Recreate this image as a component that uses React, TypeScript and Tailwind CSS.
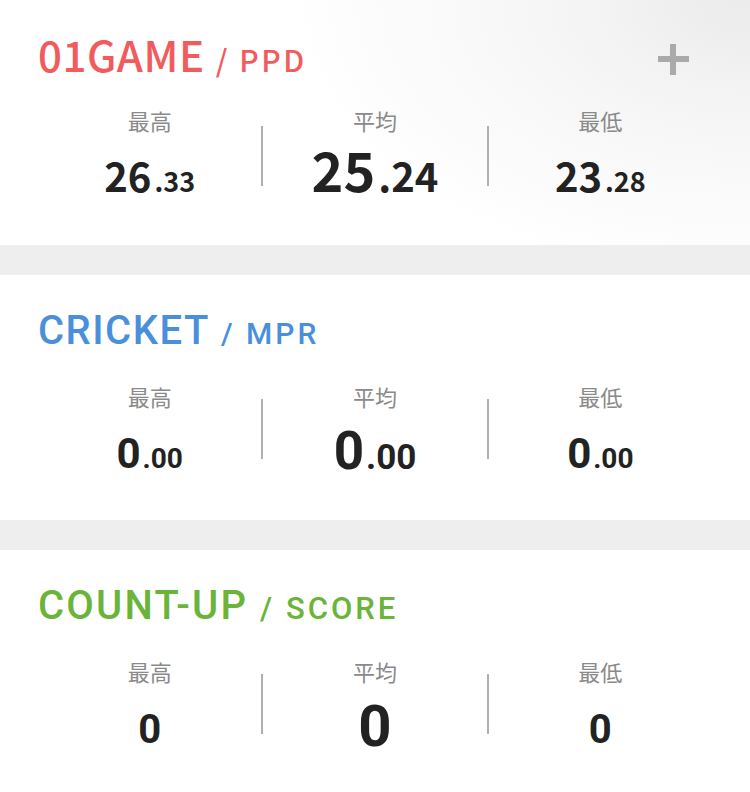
import React from "react";

type Num = { int: string; dec?: string };
type StatDef = { value: Num; intCls: string; decCls: string; mt: string };

const cjk = "font-['Noto_Sans_CJK_JP',sans-serif]";
const roboto = "font-['Roboto','Noto_Sans_CJK_JP',sans-serif]";

function Stat({ label, value, intCls, decCls, mt, font }: StatDef & { label: string; font: string }) {
  return (
    <div className="flex-1 flex flex-col items-center">
      <div className={`${cjk} text-[22px] leading-none text-[#8a8a8a] h-[26px]`}>{label}</div>
      <div className={`${font} font-bold text-[#222] flex items-baseline leading-none ${mt}`}>
        <span className={intCls}>{value.int}</span>
        {value.dec !== undefined && <span className={decCls}>{value.dec}</span>}
      </div>
    </div>
  );
}

function Divider({ mt }: { mt: string }) {
  return <div className={`w-[2px] h-[60px] bg-[#b0b0b0] ${mt}`} />;
}

function Section({
  title,
  unit,
  color,
  font,
  titleCls,
  unitCls,
  stats,
  plus,
  gradient,
  height,
  pt,
  rowMt,
  divMt,
}: {
  title: string;
  unit: string;
  color: string;
  font: string;
  titleCls: string;
  unitCls: string;
  stats: StatDef[];
  plus?: boolean;
  gradient?: boolean;
  height: string;
  pt: string;
  rowMt: string;
  divMt: string;
}) {
  const labels = ["最高", "平均", "最低"];
  return (
    <div
      className={`relative bg-white px-[38px] shrink-0 ${height} ${
        gradient
          ? "bg-[radial-gradient(ellipse_460px_280px_at_100%_0%,#ebebeb_0%,#f6f6f6_45%,#ffffff_100%)]"
          : ""
      }`}
    >
      <div className={`flex items-baseline leading-none ${pt} ${font}`} style={{ color }}>
        <span className={titleCls}>{title}</span>
        <span className={unitCls}>/ {unit}</span>
      </div>
      {plus && (
        <div className="absolute left-[658px] top-[44px] w-[31px] h-[31px]">
          <div className="absolute left-0 top-[12px] w-[31px] h-[6px] bg-[#aaaaaa]" />
          <div className="absolute left-[12px] top-0 w-[6px] h-[31px] bg-[#aaaaaa]" />
        </div>
      )}
      <div className={`flex items-start ${rowMt}`}>
        <Stat label={labels[0]} font={font} {...stats[0]} />
        <Divider mt={divMt} />
        <Stat label={labels[1]} font={font} {...stats[1]} />
        <Divider mt={divMt} />
        <Stat label={labels[2]} font={font} {...stats[2]} />
      </div>
    </div>
  );
}

export default function App() {
  return (
    <div className="w-[750px] h-[792px] bg-[#eeeeee] overflow-hidden flex flex-col">
      <Section
        title="01GAME"
        unit="PPD"
        color="#f25b5c"
        font={cjk}
        titleCls="text-[42px] font-medium tracking-[0.6px] mr-[11px]"
        unitCls="text-[30px] font-medium tracking-[2.5px]"
        plus
        gradient
        height="h-[245px]"
        pt="pt-[33px]"
        rowMt="mt-[34px]"
        divMt="mt-[17px]"
        stats={[
          { value: { int: "26", dec: ".33" }, intCls: "text-[40px]", decCls: "text-[27px] ml-[3px]", mt: "mt-[20px]" },
          { value: { int: "25", dec: ".24" }, intCls: "text-[54px]", decCls: "text-[40px] ml-[3px]", mt: "mt-[7px]" },
          { value: { int: "23", dec: ".28" }, intCls: "text-[40px]", decCls: "text-[27px] ml-[3px]", mt: "mt-[20px]" },
        ]}
      />
      <div className="h-[30px] shrink-0" />
      <Section
        title="CRICKET"
        unit="MPR"
        color="#4a8fdc"
        font={roboto}
        titleCls="text-[40px] font-medium tracking-[1.5px] mr-[11px]"
        unitCls="text-[30px] font-medium tracking-[3px]"
        height="h-[245px]"
        pt="pt-[36px]"
        rowMt="mt-[34px]"
        divMt="mt-[14px]"
        stats={[
          { value: { int: "0", dec: ".00" }, intCls: "text-[42px]", decCls: "text-[28px] ml-[2px]", mt: "mt-[22px]" },
          { value: { int: "0", dec: ".00" }, intCls: "text-[53px]", decCls: "text-[35px] ml-[2px]", mt: "mt-[14px]" },
          { value: { int: "0", dec: ".00" }, intCls: "text-[42px]", decCls: "text-[28px] ml-[2px]", mt: "mt-[22px]" },
        ]}
      />
      <div className="h-[30px] shrink-0" />
      <Section
        title="COUNT-UP"
        unit="SCORE"
        color="#6ab43a"
        font={roboto}
        titleCls="text-[40px] font-medium tracking-[2.2px] mr-[12px]"
        unitCls="text-[31px] font-medium tracking-[3px]"
        height="h-[242px]"
        pt="pt-[36px]"
        rowMt="mt-[34px]"
        divMt="mt-[14px]"
        stats={[
          { value: { int: "0" }, intCls: "text-[40px]", decCls: "", mt: "mt-[24px]" },
          { value: { int: "0" }, intCls: "text-[58px]", decCls: "", mt: "mt-[11px]" },
          { value: { int: "0" }, intCls: "text-[40px]", decCls: "", mt: "mt-[24px]" },
        ]}
      />
    </div>
  );
}
